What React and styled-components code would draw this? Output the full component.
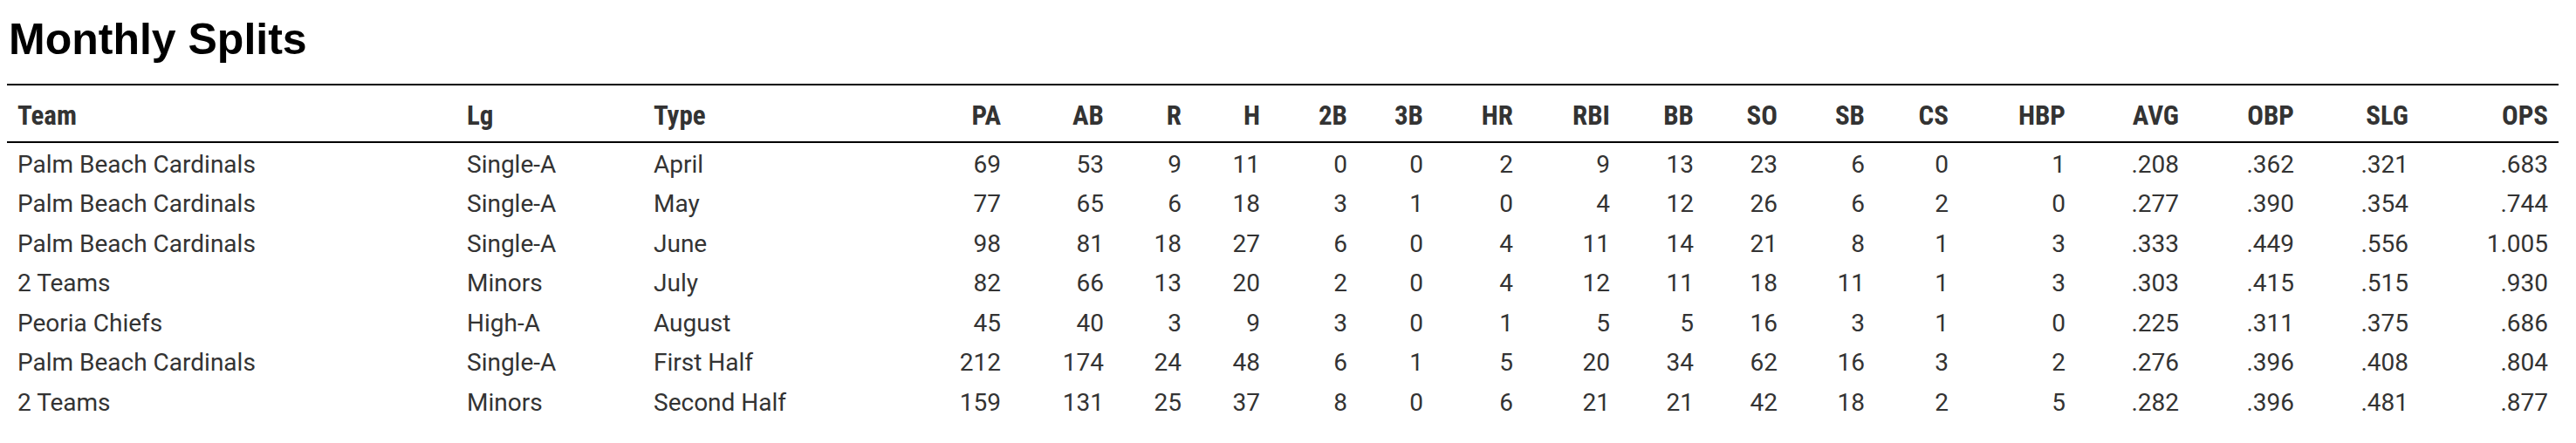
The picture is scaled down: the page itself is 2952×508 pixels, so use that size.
import styled, { createGlobalStyle } from "styled-components";

const GlobalStyle = createGlobalStyle`
    body {
        margin: 8px;
        background: #fff;
    }
`

const Section = styled.section`
    width: 2924px;
`

const Title = styled.h2`
    margin: 12px 0 26px 2px;
    font-family: "Liberation Sans", Arial, sans-serif;
    font-size: 50px;
    line-height: 50px;
    font-weight: bold;
    color: #000;
`

const Table = styled.table`
    width: 100%;
    table-layout: fixed;
    border-collapse: collapse;
    font-family: Roboto, sans-serif;
    color: #333;
`

const HeadRow = styled.tr`
    border-top: 2px solid #000;
    border-bottom: 2px solid #000;
`

const Th = styled.th`
    padding: 5px 12px 0;
    height: 59px;
    line-height: 59px;
    font-size: 31px;
    font-weight: bold;
    font-stretch: 75%;
    text-align: ${p => (p.$num ? "right" : "left")};
    white-space: nowrap;
`

const Td = styled.td`
    padding: 3.5px 12px 0;
    height: 42px;
    line-height: 42px;
    font-size: 28px;
    text-align: ${p => (p.$num ? "right" : "left")};
    white-space: nowrap;
`

const columns = [
    { key: "Team", width: 515 },
    { key: "Lg", width: 214 },
    { key: "Type", width: 300 },
    { key: "PA", width: 122, num: true },
    { key: "AB", width: 118, num: true },
    { key: "R", width: 89, num: true },
    { key: "H", width: 90, num: true },
    { key: "2B", width: 100, num: true },
    { key: "3B", width: 87, num: true },
    { key: "HR", width: 103, num: true },
    { key: "RBI", width: 111, num: true },
    { key: "BB", width: 96, num: true },
    { key: "SO", width: 96, num: true },
    { key: "SB", width: 100, num: true },
    { key: "CS", width: 96, num: true },
    { key: "HBP", width: 134, num: true },
    { key: "AVG", width: 130, num: true },
    { key: "OBP", width: 132, num: true },
    { key: "SLG", width: 131, num: true },
    { key: "OPS", width: 160, num: true },
]

const rows = [
    ["Palm Beach Cardinals", "Single-A", "April", 69, 53, 9, 11, 0, 0, 2, 9, 13, 23, 6, 0, 1, ".208", ".362", ".321", ".683"],
    ["Palm Beach Cardinals", "Single-A", "May", 77, 65, 6, 18, 3, 1, 0, 4, 12, 26, 6, 2, 0, ".277", ".390", ".354", ".744"],
    ["Palm Beach Cardinals", "Single-A", "June", 98, 81, 18, 27, 6, 0, 4, 11, 14, 21, 8, 1, 3, ".333", ".449", ".556", "1.005"],
    ["2 Teams", "Minors", "July", 82, 66, 13, 20, 2, 0, 4, 12, 11, 18, 11, 1, 3, ".303", ".415", ".515", ".930"],
    ["Peoria Chiefs", "High-A", "August", 45, 40, 3, 9, 3, 0, 1, 5, 5, 16, 3, 1, 0, ".225", ".311", ".375", ".686"],
    ["Palm Beach Cardinals", "Single-A", "First Half", 212, 174, 24, 48, 6, 1, 5, 20, 34, 62, 16, 3, 2, ".276", ".396", ".408", ".804"],
    ["2 Teams", "Minors", "Second Half", 159, 131, 25, 37, 8, 0, 6, 21, 21, 42, 18, 2, 5, ".282", ".396", ".481", ".877"],
]

export default function App() {
    return (
        <>
            <GlobalStyle />
            <Section>
                <Title>Monthly Splits</Title>
                <Table>
                    <colgroup>
                        {columns.map(c => <col key={c.key} style={{ width: c.width }} />)}
                    </colgroup>
                    <thead>
                        <HeadRow>
                            {columns.map(c => <Th key={c.key} $num={c.num}>{c.key}</Th>)}
                        </HeadRow>
                    </thead>
                    <tbody>
                        {rows.map((r, i) => (
                            <tr key={i}>
                                {r.map((v, j) => <Td key={j} $num={columns[j].num}>{v}</Td>)}
                            </tr>
                        ))}
                    </tbody>
                </Table>
            </Section>
        </>
    )
}
